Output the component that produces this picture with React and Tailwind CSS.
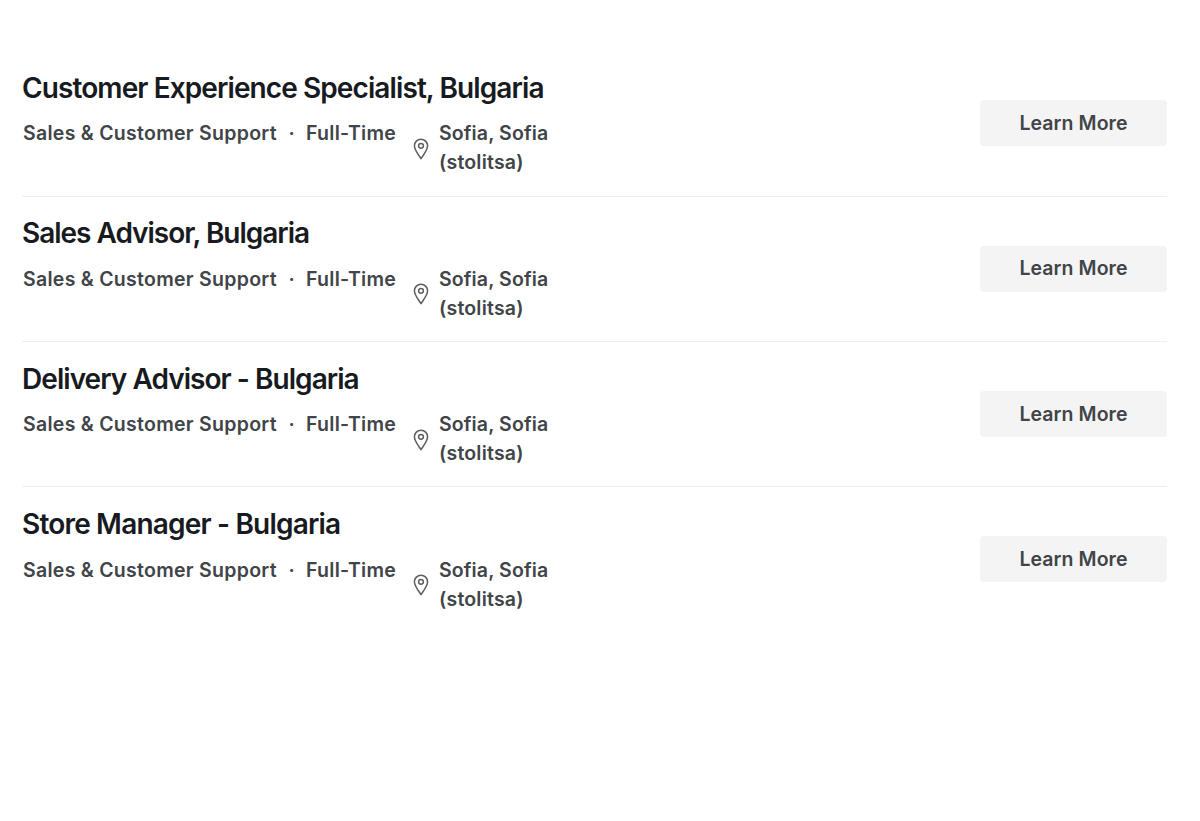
import React from 'react';

const jobs = [
  { id: 1, title: 'Customer Experience Specialist, Bulgaria', titleClass: 'tracking-[-0.9px]' },
  { id: 2, title: 'Sales Advisor, Bulgaria', titleClass: 'tracking-[-1.02px]' },
  { id: 3, title: 'Delivery Advisor - Bulgaria', titleClass: 'tracking-[-0.95px]' },
  { id: 4, title: 'Store Manager - Bulgaria', titleClass: 'tracking-[-0.81px]' },
];

const PinIcon = () => (
  <svg width="16" height="22" viewBox="0 0 16 22" fill="none" stroke="#5c5e62" strokeWidth="1.5" className="mt-px shrink-0">
    <path d="M8 20.6C6.4 18 1.4 12.3 1.4 7.8a6.6 6.6 0 0 1 13.2 0C14.6 12.3 9.6 18 8 20.6Z" strokeLinejoin="round" />
    <circle cx="8" cy="7.8" r="2.4" />
  </svg>
);

const JobRow = ({ job }) => (
  <li className="flex h-[145.4px] items-start justify-between border-b border-[#eeeeee] last:border-b-0">
    <div className="pt-[18.8px]">
      <h2 className={`whitespace-nowrap text-[28px] font-semibold leading-9 text-[#171a20] ${job.titleClass}`}>
        {job.title}
      </h2>
      <div className="mt-[13.4px] flex whitespace-nowrap pl-px text-[19.5px] font-semibold leading-[29px] text-[#414449]">
        <span className="w-[254px] tracking-[0.28px]">Sales &amp; Customer Support</span>
        <span className="w-[29px] text-center">·</span>
        <span className="w-[107px] tracking-[0.28px]">Full-Time</span>
        <div className="flex items-center gap-[10px]">
          <PinIcon />
          <span className="tracking-[0.12px]">
            Sofia, Sofia
            <br />
            <span className="tracking-[0.2px]">(stolitsa)</span>
          </span>
        </div>
      </div>
    </div>
    <button className="mt-[49px] h-[46px] w-[187px] rounded bg-[#f4f4f4] pt-px text-[19.5px] font-semibold tracking-[0.08px] text-[#414449]">
      Learn More
    </button>
  </li>
);

const App = () => (
  <main className="min-h-[821px] bg-white pl-[22px] pr-[33px] pt-[51.2px] font-['Inter',sans-serif]">
    <ul>
      {jobs.map((job) => (
        <JobRow key={job.id} job={job} />
      ))}
    </ul>
  </main>
);

export default App;
